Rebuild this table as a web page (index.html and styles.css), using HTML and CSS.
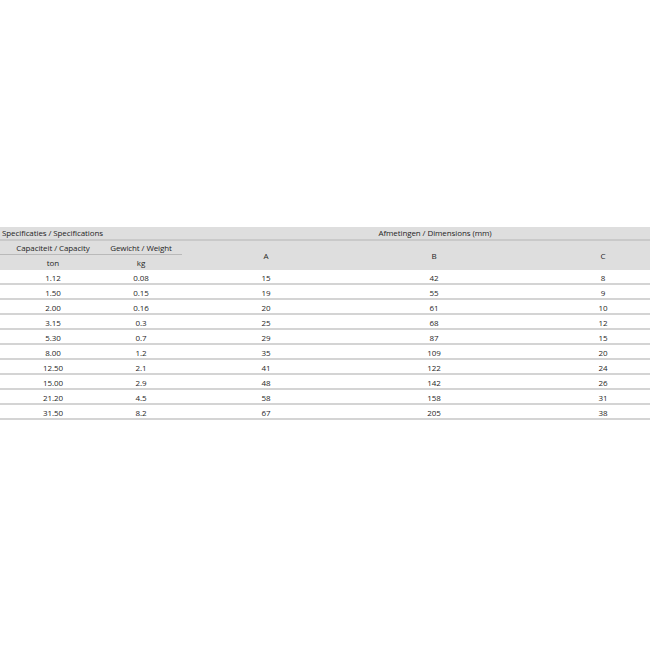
FILE: index.html
```html
<!DOCTYPE html>
<html>
<head>
<meta charset="utf-8">
<link rel="stylesheet" href="styles.css">
</head>
<body>
<table class="spec">
  <colgroup>
    <col class="c1"><col class="c2"><col class="ca"><col class="cb"><col class="cc">
  </colgroup>
  <thead>
    <tr class="h1">
      <th colspan="2" class="left">Specificaties / Specifications</th>
      <th colspan="3">Afmetingen / Dimensions (mm)</th>
    </tr>
    <tr class="h2">
      <th class="ul">Capaciteit / Capacity</th>
      <th class="ul w">Gewicht / Weight</th>
      <th rowspan="2">A</th>
      <th rowspan="2">B</th>
      <th rowspan="2">C</th>
    </tr>
    <tr class="h3">
      <th>ton</th>
      <th class="w">kg</th>
    </tr>
  </thead>
  <tbody>
    <tr><td>1.12</td><td>0.08</td><td>15</td><td>42</td><td>8</td></tr>
    <tr><td>1.50</td><td>0.15</td><td>19</td><td>55</td><td>9</td></tr>
    <tr><td>2.00</td><td>0.16</td><td>20</td><td>61</td><td>10</td></tr>
    <tr><td>3.15</td><td>0.3</td><td>25</td><td>68</td><td>12</td></tr>
    <tr><td>5.30</td><td>0.7</td><td>29</td><td>87</td><td>15</td></tr>
    <tr><td>8.00</td><td>1.2</td><td>35</td><td>109</td><td>20</td></tr>
    <tr><td>12.50</td><td>2.1</td><td>41</td><td>122</td><td>24</td></tr>
    <tr><td>15.00</td><td>2.9</td><td>48</td><td>142</td><td>26</td></tr>
    <tr><td>21.20</td><td>4.5</td><td>58</td><td>158</td><td>31</td></tr>
    <tr><td>31.50</td><td>8.2</td><td>67</td><td>205</td><td>38</td></tr>
  </tbody>
</table>
</body>
</html>
```
FILE: styles.css
```css
html, body {
  margin: 0;
  padding: 0;
  background: #fff;
  overflow: hidden;
  width: 650px;
  height: 650px;
}
.spec {
  margin-top: 227px;
  width: 688px;
  border-collapse: collapse;
  table-layout: fixed;
  font-family: "Open Sans", "Noto Sans", sans-serif;
  font-size: 8px;
  line-height: 10px;
  color: #1f1f1f;
  letter-spacing: -0.1px;
}
.c1 { width: 106px; }
.c2 { width: 76px; }
.ca { width: 168px; }
.cb { width: 168px; }
.cc { width: 170px; }
.spec th {
  background: #dedede;
  font-weight: normal;
  text-align: center;
  padding: 0;
  white-space: nowrap;
}
.spec th.left { text-align: left; padding-left: 2px; }
.spec th.w { padding-right: 6px; }
.h1 th { height: 12px; border-bottom: 2px solid #c9c9c9; }
.h2 th { height: 13px; }
.h2 th.ul { border-bottom: 1px solid #b9b9b9; }
.h3 th { height: 15px; }
.spec td {
  height: 11px;
  padding: 2px 0 0;
  text-align: center;
  border-bottom: 2px solid #d4d4d4;
  white-space: nowrap;
}
.spec td:nth-child(2) { padding-right: 6px; }
```
